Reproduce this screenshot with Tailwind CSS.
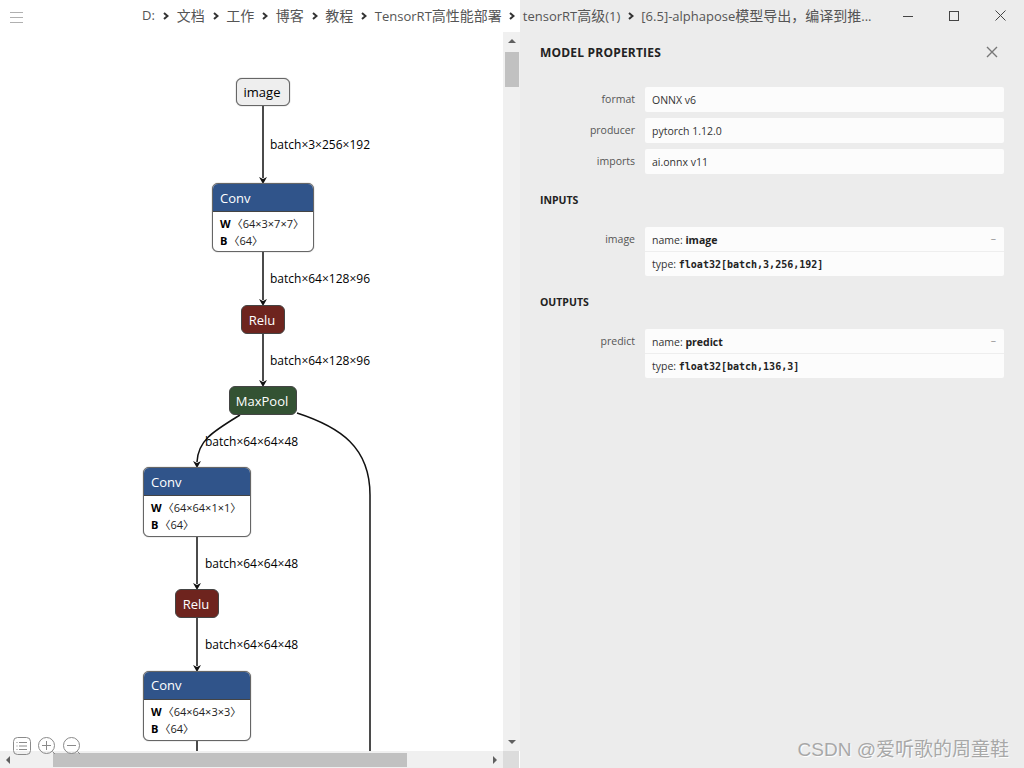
<!DOCTYPE html>
<html lang="zh-CN">
<head>
  <meta charset="UTF-8">
  <title>Netron</title>
  <script src="https://cdn.jsdelivr.net/npm/@tailwindcss/browser@4"></script>
</head>
<body class="w-[1024px] h-[768px] overflow-hidden bg-[#ececec] font-['Open_Sans','Noto_Sans_CJK_SC',sans-serif] text-[#222]">
  <div class="flex w-[1024px] h-[768px]">

    <!-- Left: graph view -->
    <div class="relative w-[520px] h-[768px] bg-white shrink-0 overflow-hidden">
      <!-- menu button -->
      <svg class="absolute left-[10px] top-[11px]" width="13" height="13" viewBox="0 0 13 13" stroke="#b0b0b0" stroke-width="1"><path d="M0 1.5H13M0 6.5H13M0 11.5H13"/></svg>

      <!-- edges -->
      <svg class="absolute left-0 top-0" width="503" height="751" fill="none" stroke="#111" stroke-width="1.5">
        <path d="M263 106V178M263 252V300M263 334V381M197 537V584M197 618V666M197 740V751"/>
        <path d="M240 415C214 431 198 440 197 462"/>
        <path d="M297 413C340 427 370 447 370 495V751"/>
        <path fill="#111" stroke="none" d="M259 177L263 184L267 177L263 179ZM259 299L263 306L267 299L263 301ZM259 380L263 387L267 380L263 382ZM193 461L197 468L201 461L197 463ZM193 583L197 590L201 583L197 585ZM193 665L197 672L201 665L197 667Z"/>
      </svg>

      <!-- edge labels -->
      <span class="absolute left-[270px] top-[136px] text-[12px] leading-[18px] text-black">batch×3×256×192</span>
      <span class="absolute left-[270px] top-[270px] text-[12px] leading-[18px] text-black">batch×64×128×96</span>
      <span class="absolute left-[270px] top-[352px] text-[12px] leading-[18px] text-black">batch×64×128×96</span>
      <span class="absolute left-[205px] top-[433px] text-[12px] leading-[18px] text-black">batch×64×64×48</span>
      <span class="absolute left-[205px] top-[555px] text-[12px] leading-[18px] text-black">batch×64×64×48</span>
      <span class="absolute left-[205px] top-[636px] text-[12px] leading-[18px] text-black">batch×64×64×48</span>

      <!-- nodes -->
      <div class="absolute left-[236px] top-[78px] w-[54px] h-[28px] pt-[1px] pr-[2px] flex items-center justify-center rounded-[6px] border border-[#666] shadow-[0_0_1px_#555] bg-[#eee] text-[13px] text-black">image</div>

      <div class="absolute left-[212px] top-[183px] w-[102px] h-[69px] rounded-[6px] border border-[#666] shadow-[0_0_1px_#555] bg-white overflow-hidden">
        <div class="h-[28px] pt-[3px] bg-[#30548a] border-b border-[#444] px-[7px] flex items-center text-[13px] text-white">Conv</div>
        <div class="px-[7px] pt-[3px] text-[11px] leading-[17px] text-[#222] whitespace-nowrap">
          <div class="flex"><b class="text-black">W</b><span class="ml-[1px]">〈64×3×7×7〉</span></div>
          <div class="flex"><b class="text-black">B</b><span class="ml-[1px]">〈64〉</span></div>
        </div>
      </div>

      <div class="absolute left-[241px] top-[305px] w-[44px] h-[29px] pt-[3px] pr-[2px] flex items-center justify-center rounded-[6px] border border-[#444] bg-[#6e241e] text-[13px] text-white">Relu</div>

      <div class="absolute left-[229px] top-[386px] w-[68px] h-[29px] pt-[3px] pr-[2px] flex items-center justify-center rounded-[6px] border border-[#444] bg-[#335233] text-[13px] text-white whitespace-nowrap">MaxPool</div>

      <div class="absolute left-[143px] top-[467px] w-[108px] h-[70px] rounded-[6px] border border-[#666] shadow-[0_0_1px_#555] bg-white overflow-hidden">
        <div class="h-[28px] pt-[3px] bg-[#30548a] border-b border-[#444] px-[7px] flex items-center text-[13px] text-white">Conv</div>
        <div class="px-[7px] pt-[3px] text-[11px] leading-[17px] text-[#222] whitespace-nowrap">
          <div class="flex"><b class="text-black">W</b><span class="ml-[1px]">〈64×64×1×1〉</span></div>
          <div class="flex"><b class="text-black">B</b><span class="ml-[1px]">〈64〉</span></div>
        </div>
      </div>

      <div class="absolute left-[175px] top-[589px] w-[44px] h-[29px] pt-[3px] pr-[2px] flex items-center justify-center rounded-[6px] border border-[#444] bg-[#6e241e] text-[13px] text-white">Relu</div>

      <div class="absolute left-[143px] top-[671px] w-[108px] h-[70px] rounded-[6px] border border-[#666] shadow-[0_0_1px_#555] bg-white overflow-hidden">
        <div class="h-[28px] pt-[1px] bg-[#30548a] border-b border-[#444] px-[7px] flex items-center text-[13px] text-white">Conv</div>
        <div class="px-[7px] pt-[3px] text-[11px] leading-[17px] text-[#222] whitespace-nowrap">
          <div class="flex"><b class="text-black">W</b><span class="ml-[1px]">〈64×64×3×3〉</span></div>
          <div class="flex"><b class="text-black">B</b><span class="ml-[1px]">〈64〉</span></div>
        </div>
      </div>

      <!-- vertical scrollbar -->
      <div class="absolute left-[503px] top-[32px] w-[17px] h-[719px] bg-[#f0f0f0]">
        <div class="absolute left-[5px] top-[7px] w-0 h-0 border-x-[4px] border-x-transparent border-b-[4px] border-b-[#606060]"></div>
        <div class="absolute left-[2px] top-[20px] w-[14px] h-[35px] bg-[#c1c1c1]"></div>
        <div class="absolute left-[5px] top-[708px] w-0 h-0 border-x-[4px] border-x-transparent border-t-[4px] border-t-[#606060]"></div>
      </div>

      <!-- horizontal scrollbar -->
      <div class="absolute left-0 top-[751px] w-[503px] h-[17px] bg-[#f0f0f0]">
        <div class="absolute left-[6px] top-[5px] w-0 h-0 border-y-[4px] border-y-transparent border-r-[4px] border-r-[#606060]"></div>
        <div class="absolute left-[53px] top-[2px] w-[354px] h-[14px] bg-[#c1c1c1]"></div>
        <div class="absolute left-[493px] top-[5px] w-0 h-0 border-y-[4px] border-y-transparent border-l-[4px] border-l-[#606060]"></div>
      </div>
      <div class="absolute left-[503px] top-[751px] w-[16px] h-[17px] bg-[#dcdcdc]"></div>

      <!-- zoom controls -->
      <div class="absolute left-[12px] top-[736px] flex gap-[6px]">
        <svg width="20" height="20" viewBox="0 0 20 20" fill="none" stroke="#8a8a8a"><rect x="1.5" y="1.5" width="17" height="17" rx="4"/><path d="M7 6.5H15M7 10H15M7 13.5H15M4.5 6.5H5.5M4.5 10H5.5M4.5 13.5H5.5"/></svg>
        <svg class="-ml-[1px]" width="20" height="20" viewBox="0 0 20 20" fill="none" stroke="#8a8a8a"><circle cx="9.5" cy="9.5" r="8"/><path d="M5 9.5H14M9.5 5V14M15.5 15.5L18 18"/></svg>
        <svg class="-ml-[1px]" width="20" height="20" viewBox="0 0 20 20" fill="none" stroke="#8a8a8a"><circle cx="9.5" cy="9.5" r="8"/><path d="M5 9.5H14M15.5 15.5L18 18"/></svg>
      </div>
    </div>

    <!-- Right: model properties sidebar -->
    <div class="w-[504px] pt-[32px] pl-[20px] pr-[20px] text-[10.5px] text-[#333]">
      <div class="flex items-center justify-between h-[40px] pr-[6px]">
        <h2 class="pt-[2px] text-[12px] font-bold tracking-[0.2px] text-[#222]">MODEL PROPERTIES</h2>
        <svg width="12" height="12" viewBox="0 0 12 12" stroke="#777" stroke-width="1.4"><path d="M1 1L11 11M11 1L1 11"/></svg>
      </div>

      <div class="mt-[15px] flex flex-col gap-[6px]">
        <div class="flex h-[25px]">
          <span class="w-[95px] text-right leading-[24px] text-[#555]">format</span>
          <div class="ml-[10px] flex-1 bg-[#fcfcfc] rounded-[2px] px-[7px] leading-[26px]">ONNX v6</div>
        </div>
        <div class="flex h-[25px]">
          <span class="w-[95px] text-right leading-[24px] text-[#555]">producer</span>
          <div class="ml-[10px] flex-1 bg-[#fcfcfc] rounded-[2px] px-[7px] leading-[26px]">pytorch 1.12.0</div>
        </div>
        <div class="flex h-[25px]">
          <span class="w-[95px] text-right leading-[24px] text-[#555]">imports</span>
          <div class="ml-[10px] flex-1 bg-[#fcfcfc] rounded-[2px] px-[7px] leading-[26px]">ai.onnx v11</div>
        </div>
      </div>

      <h3 class="mt-[17px] text-[10.5px] leading-[18px] font-bold text-[#222]">INPUTS</h3>
      <div class="mt-[18px] flex">
        <span class="w-[95px] text-right leading-[24px] text-[#555]">image</span>
        <div class="ml-[10px] flex-1 bg-[#fcfcfc] rounded-[2px]">
          <div class="relative h-[25px] px-[7px] leading-[26px] border-b border-[#eee]">name: <b class="text-[#222]">image</b><span class="absolute right-[8px] top-[-2px] text-[#999]">–</span></div>
          <div class="h-[24px] px-[7px] leading-[24px]">type: <code class="font-['DejaVu_Sans_Mono',monospace] text-[10px] font-bold text-[#222]">float32[batch,3,256,192]</code></div>
        </div>
      </div>

      <h3 class="mt-[17px] text-[10.5px] leading-[18px] font-bold text-[#222]">OUTPUTS</h3>
      <div class="mt-[18px] flex">
        <span class="w-[95px] text-right leading-[24px] text-[#555]">predict</span>
        <div class="ml-[10px] flex-1 bg-[#fcfcfc] rounded-[2px]">
          <div class="relative h-[25px] px-[7px] leading-[26px] border-b border-[#eee]">name: <b class="text-[#222]">predict</b><span class="absolute right-[8px] top-[-2px] text-[#999]">–</span></div>
          <div class="h-[24px] px-[7px] leading-[24px]">type: <code class="font-['DejaVu_Sans_Mono',monospace] text-[10px] font-bold text-[#222]">float32[batch,136,3]</code></div>
        </div>
      </div>
    </div>
  </div>

  <!-- title bar, runs across both panes -->
  <div class="absolute left-[142px] top-0 h-[31px] flex items-center text-[14px] text-[#555] whitespace-nowrap">
    <span class="text-[13px]">D:</span>
    <svg class="mx-[8px]" width="6" height="8" viewBox="0 0 6 8" fill="none" stroke="#333" stroke-width="2"><path d="M1 1L4.5 4L1 7"/></svg>
    <span>文档</span>
    <svg class="mx-[7.75px]" width="6" height="8" viewBox="0 0 6 8" fill="none" stroke="#333" stroke-width="2"><path d="M1 1L4.5 4L1 7"/></svg>
    <span>工作</span>
    <svg class="mx-[7.75px]" width="6" height="8" viewBox="0 0 6 8" fill="none" stroke="#333" stroke-width="2"><path d="M1 1L4.5 4L1 7"/></svg>
    <span>博客</span>
    <svg class="mx-[7.75px]" width="6" height="8" viewBox="0 0 6 8" fill="none" stroke="#333" stroke-width="2"><path d="M1 1L4.5 4L1 7"/></svg>
    <span>教程</span>
    <svg class="mx-[7.75px]" width="6" height="8" viewBox="0 0 6 8" fill="none" stroke="#333" stroke-width="2"><path d="M1 1L4.5 4L1 7"/></svg>
    <span><span class="text-[13px]">TensorRT</span>高性能部署</span>
    <svg class="mx-[7.5px]" width="6" height="8" viewBox="0 0 6 8" fill="none" stroke="#333" stroke-width="2"><path d="M1 1L4.5 4L1 7"/></svg>
    <span><span class="text-[13px]">tensorRT</span>高级<span class="text-[13px]">(1)</span></span>
    <svg class="mx-[7.5px]" width="6" height="8" viewBox="0 0 6 8" fill="none" stroke="#333" stroke-width="2"><path d="M1 1L4.5 4L1 7"/></svg>
    <span><span class="text-[13px]">[6.5]-alphapose</span>模型导出，编译到推<span class="text-[13px]">...</span></span>
  </div>

  <!-- window buttons -->
  <div class="absolute left-[903px] top-[10px] flex items-center gap-[36px]">
    <svg width="10" height="10" viewBox="0 0 10 10" stroke="#444"><path d="M0 5.5H10"/></svg>
    <svg width="10" height="10" viewBox="0 0 10 10" fill="none" stroke="#444"><rect x="0.5" y="0.5" width="9" height="9"/></svg>
    <svg width="11" height="11" viewBox="0 0 11 11" stroke="#444"><path d="M0.5 0.5L10.5 10.5M10.5 0.5L0.5 10.5"/></svg>
  </div>

  <!-- watermark -->
  <div class="absolute right-[15px] top-[737px] text-[19px] leading-[26px] text-[#a8a8a8] [text-shadow:1px_1px_1px_#fff] font-['Liberation_Sans','Noto_Sans_CJK_SC',sans-serif]">CSDN @爱听歌的周童鞋</div>
</body>
</html>
